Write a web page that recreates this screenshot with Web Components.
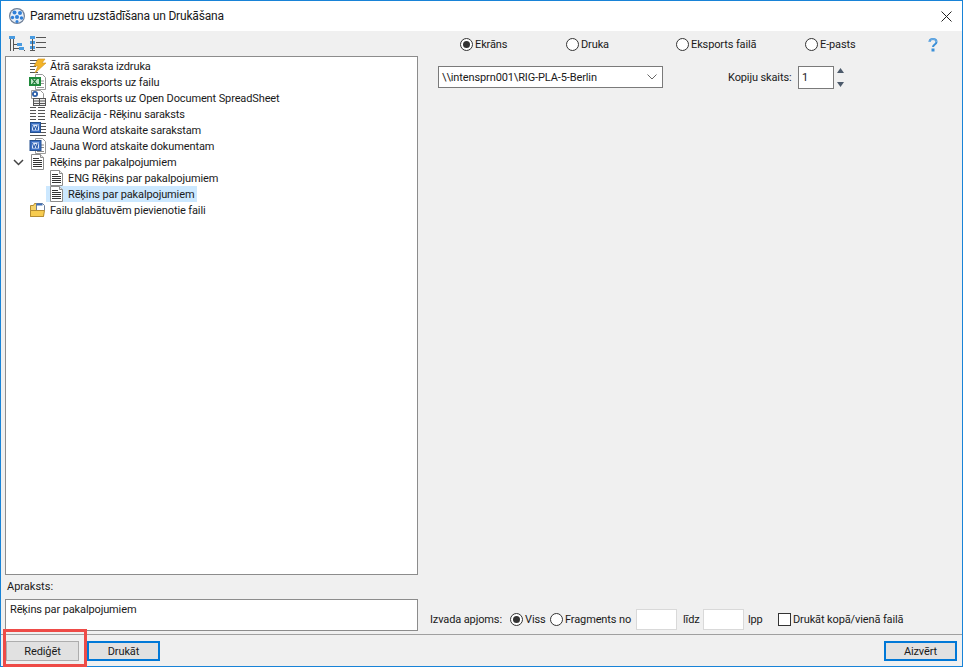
<!DOCTYPE html>
<html>
<head>
<meta charset="utf-8">
<style>
  html, body { margin: 0; padding: 0; width: 963px; height: 667px; overflow: hidden; background: #f0f0f0; }
  body { font: 11px Roboto, "Open Sans", sans-serif; color: #1a1a1a; letter-spacing: -0.12px; }
</style>
</head>
<body>
<template id="icons">
  <svg data-i="quick" width="16" height="16" viewBox="0 0 16 16"><g stroke="#555"><path d="M0 2.500h9M0 5.500h7M0 8.500h6M0 11.500h5M0 14.500h8"/></g><path d="M8 1h7l-3 4h4L5 15l3-7H4z" fill="#f3b428" stroke="#d0901a" stroke-width=".6"/></svg>
  <svg data-i="excel" width="16" height="16" viewBox="0 0 16 16"><path d="M5.500.5h7l3 3v12h-10z" fill="#fff" stroke="#999"/><path d="M11 7h3M11 9.500h3M7 13.500h7" stroke="#999"/><rect x="-1" y="3" width="12" height="9" fill="#1f8a3b"/><rect x="1" y="5" width="8" height="5" fill="#bfe6c8"/><path d="M2.500 5l4 5M6.500 5l-4 5" stroke="#177030" stroke-width="1.200"/></svg>
  <svg data-i="ods" width="16" height="16" viewBox="0 0 16 16"><path d="M1.500.5h9l3 3v5h-12z" fill="#fff" stroke="#999"/><circle cx="5" cy="4" r="3" fill="#2c5fa8"/><circle cx="5" cy="4" r="1.200" fill="#fff"/><rect x="3.500" y="8.500" width="12" height="7" fill="#eee" stroke="#555"/><path d="M3.500 11h12M3.500 13.500h12M9.500 8.500v7" stroke="#555"/></svg>
  <svg data-i="list" width="16" height="16" viewBox="0 0 16 16"><g stroke="#555"><path d="M0 1.500h6M0 4.500h6M0 7.500h6M0 10.500h6M0 13.500h6M8 1.500h7M8 4.500h7M8 7.500h7M8 10.500h7M8 13.500h7"/></g></svg>
  <svg data-i="wordlist" width="16" height="16" viewBox="0 0 16 16"><g stroke="#555"><path d="M11 1.500h5M11 4.500h5M11 7.500h5M11 10.500h5M0 13.500h16"/></g><rect x=".5" y=".5" width="10" height="10" fill="#3a6fc4" stroke="#24508f"/><rect x="2" y="2.500" width="7" height="6" fill="#dce8f8"/><path d="M2.500 3l1.500 5 1.500-4 1.500 4 1-5" fill="none" stroke="#2456a8"/></svg>
  <svg data-i="worddoc" width="16" height="16" viewBox="0 0 16 16"><path d="M5.500.5h7l3 3v12h-10z" fill="#fff" stroke="#999"/><path d="M11 7h3M11 9.500h3M7 13.500h7" stroke="#888"/><rect y="2.500" width="11" height="10" fill="#3a6fc4" stroke="#24508f"/><rect x="2" y="4.500" width="7" height="6" fill="#dce8f8"/><path d="M2.500 5l1.500 5 1.500-4 1.500 4 1-5" fill="none" stroke="#2456a8"/></svg>
  <svg data-i="doc" width="16" height="16" viewBox="0 0 16 16"><path d="M1.500.5h9l3 3v12h-12z" fill="#fff" stroke="#8c8c8c"/><path d="M10.500.5v3h3" fill="#e8e8e8" stroke="#8c8c8c"/><path d="M3 4.500h6M3 6.500h9M3 8.500h9M3 10.500h9M3 12.500h9" stroke="#333"/></svg>
  <svg data-i="folder" width="16" height="16" viewBox="0 0 16 16"><path d="M.5 3.500h3l1-2h5v2h4v11H.5z" fill="#f6d36a" stroke="#b58d32"/><path d="M6.500 1.500h6l2 2v5h-8z" fill="#fff" stroke="#6f7f9a"/><path d="M6.500 1.500h6v2h-6z" fill="#3f6fb5"/><path d="M.5 8.500h14l-1 6H.5z" fill="#f7cc50" stroke="#b58d32"/></svg>
</template>

<dialog-window></dialog-window>

<script>
const iconSrc = document.getElementById('icons').content;
function iconMarkup(name) {
    return iconSrc.querySelector(`[data-i="${name}"]`).outerHTML;
}

class TitleBar extends HTMLElement {
    constructor() {
        super();
        this.attachShadow({ mode: 'open' }).innerHTML = `
            <style>
                :host { display: flex; align-items: center; height: 30px; background: #fff; padding: 0 8px; flex: none; font-size: 12px; letter-spacing: -0.18px; }
                .text { margin-left: 5px; flex: 1; }
                svg { display: block; }
            </style>
            <svg width="16" height="16" viewBox="0 0 16 16">
                <circle cx="8" cy="8" r="8" fill="#6f7f96"/>
                <circle cx="8" cy="8" r="6.800" fill="#e6eef8"/>
                <circle cx="5.500" cy="4.500" r="2" fill="#2f7fd8"/><circle cx="11" cy="5" r="2" fill="#2f7fd8"/>
                <circle cx="8" cy="9" r="2" fill="#2f7fd8"/><circle cx="3.500" cy="9.500" r="1.700" fill="#2f7fd8"/>
                <circle cx="12.500" cy="10" r="1.700" fill="#2f7fd8"/><circle cx="8" cy="13.500" r="1.500" fill="#2f7fd8"/>
            </svg>
            <span class="text"><slot></slot></span>
            <svg width="11" height="11" viewBox="0 0 11 11" style="margin-right:2px"><path d="M.5.500l10 10M10.500.500l-10 10" stroke="#222" fill="none"/></svg>
        `;
    }
}

class TreeRow extends HTMLElement {
    constructor() {
        super();
        this.attachShadow({ mode: 'open' });
    }
    connectedCallback() {
        const child = this.hasAttribute('child');
        const open = this.hasAttribute('open');
        const selected = this.hasAttribute('selected');
        this.shadowRoot.innerHTML = `
            <style>
                :host { display: flex; align-items: center; height: 16px; padding-left: ${child ? 43 : 24}px; position: relative; white-space: nowrap; }
                .box { display: flex; align-items: center; height: 16px; padding: 0 3px 0 3px; margin-left: -3px; background: ${selected ? '#cce8ff' : 'transparent'}; }
                .icon { width: 16px; height: 16px; margin-right: ${child ? 3 : 4}px; flex: none; }
                .chevron { position: absolute; left: 7px; top: 5px; }
                svg { display: block; overflow: visible; }
            </style>
            ${open ? '<svg class="chevron" width="11" height="7" viewBox="0 0 11 7"><path d="M1 1l4.500 4.500L10 1" fill="none" stroke="#444" stroke-width="1.500"/></svg>' : ''}
            <div class="box"><span class="icon">${iconMarkup(this.getAttribute('icon'))}</span><slot></slot></div>
        `;
    }
}

class TreePanel extends HTMLElement {
    constructor() {
        super();
        this.attachShadow({ mode: 'open' }).innerHTML = `
            <style>
                :host { display: block; flex: 1; background: #fff; border: 1px solid #8c8c8c; padding-top: 1px; min-height: 0; }
            </style>
            <slot></slot>
        `;
    }
}

class RadioOpt extends HTMLElement {
    constructor() {
        super();
        this.attachShadow({ mode: 'open' });
    }
    connectedCallback() {
        const on = this.hasAttribute('checked');
        this.shadowRoot.innerHTML = `
            <style>
                :host { display: inline-flex; align-items: center; white-space: nowrap; }
                .r { width: 11px; height: 11px; border: 1px solid #333; border-radius: 50%; background: #fff; margin-right: 2px; position: relative; flex: none; }
                .d { position: absolute; left: 2px; top: 2px; width: 7px; height: 7px; border-radius: 50%; background: #333; }
            </style>
            <span class="r">${on ? '<span class="d"></span>' : ''}</span><slot></slot>
        `;
    }
}

class PushButton extends HTMLElement {
    constructor() {
        super();
        this.attachShadow({ mode: 'open' });
    }
    connectedCallback() {
        const accent = this.hasAttribute('accent');
        this.shadowRoot.innerHTML = `
            <style>
                :host { display: flex; align-items: center; justify-content: center; box-sizing: border-box; width: 73px; height: 20px; background: #e1e1e1; border: ${accent ? '2px solid #0078d7' : '1px solid #adadad'}; }
            </style>
            <slot></slot>
        `;
    }
}

class FieldBox extends HTMLElement {
    constructor() {
        super();
        this.attachShadow({ mode: 'open' }).innerHTML = `
            <style>
                :host { display: flex; align-items: center; box-sizing: border-box; background: #fff; border: 1px solid #7a7a7a; padding-left: 3px; }
                :host([soft]) { border-color: #d9d9d9; }
            </style>
            <slot></slot>
        `;
    }
}

class DialogWindow extends HTMLElement {
    constructor() {
        super();
        this.attachShadow({ mode: 'open' }).innerHTML = `
            <style>
                :host { display: flex; flex-direction: column; box-sizing: border-box; width: 963px; height: 667px; border: 1px solid #1883d7; background: #f0f0f0; position: relative; }
                .main { flex: 1; display: flex; min-height: 0; border-bottom: 1px solid #a0a0a0; }
                .left { width: 413px; margin-left: 4px; flex: none; display: flex; flex-direction: column; padding-bottom: 3px; box-sizing: border-box; }
                .tools { display: flex; align-items: center; gap: 4px; height: 25px; padding-left: 4px; flex: none; }
                .tools svg { display: block; }
                .caption { height: 24px; padding-left: 2px; flex: none; display: flex; align-items: center; letter-spacing: 0; padding-bottom: 1px; box-sizing: border-box; }
                .desc { height: 32px; flex: none; box-sizing: border-box; background: #fff; border: 1px solid #8c8c8c; padding: 3px 4px; }
                .right { flex: 1; display: flex; flex-direction: column; padding-left: 12px; min-width: 0; }
                .modes { display: grid; grid-template-columns: 106px 110px 129px 122px 20px; align-items: center; height: 27px; padding-left: 30px; flex: none; }
                .modes svg { display: block; }
                .printer { display: flex; align-items: flex-start; height: 22px; margin: 8px 0 0 8px; flex: none; }
                .select { width: 225px; height: 22px; justify-content: space-between; padding-right: 5px; }
                .copies { margin-left: 65px; height: 22px; display: flex; align-items: center; }
                .copies .label { width: 70px; }
                .count { width: 36px; height: 23px; }
                .spin { margin-left: 3px; display: flex; flex-direction: column; gap: 9px; padding-top: 1px; }
                .spin svg { display: block; }
                .grow { flex: 1; }
                .range { display: grid; grid-template-columns: 80px 40px 86px 41px 26px 41px 34px 15px auto; align-items: center; height: 21px; margin-bottom: 4px; flex: none; white-space: nowrap; }
                .range .small { height: 21px; }
                .foot { height: 31px; flex: none; display: flex; align-items: flex-start; padding: 6px 5px 0 5px; gap: 8px; box-sizing: border-box; }
                .mark { position: absolute; left: 2px; top: 628px; width: 84px; height: 38px; box-sizing: border-box; border: 3px solid #ee4b47; }
                .check { width: 11px; height: 11px; border: 1px solid #333; background: #fff; }
            </style>
            <title-bar>Parametru uzstādīšana un Drukāšana</title-bar>
            <div class="main">
                <div class="left">
                    <div class="tools">
                        <svg width="17" height="17" viewBox="0 0 17 17"><path d="M1.500 3v13M4.500 3v13M4.500 9.500h4M4.500 13.500h6" stroke="#555" fill="none"/><rect x="0" y="1" width="6" height="3" fill="#4a9be0"/><rect x="8" y="8" width="5" height="3" fill="#4a9be0"/><rect x="10" y="12" width="5" height="3" fill="#4a9be0"/><path d="M15 15.500h1" stroke="#555"/></svg>
                        <svg width="17" height="17" viewBox="0 0 17 17"><g fill="#4a9be0"><rect x="0" y="1" width="5" height="3"/><rect x="0" y="6" width="5" height="3"/><rect x="0" y="11" width="5" height="3"/></g><path d="M2.500 4v11M0 15.500h5M6 2.500h10M6 7.500h10M6 12.500h10" stroke="#555" fill="none"/></svg>
                    </div>
                    <tree-panel>
                        <tree-row icon="quick">Ātrā saraksta izdruka</tree-row>
                        <tree-row icon="excel">Ātrais eksports uz failu</tree-row>
                        <tree-row icon="ods">Ātrais eksports uz Open Document SpreadSheet</tree-row>
                        <tree-row icon="list">Realizācija - Rēķinu saraksts</tree-row>
                        <tree-row icon="wordlist">Jauna Word atskaite sarakstam</tree-row>
                        <tree-row icon="worddoc">Jauna Word atskaite dokumentam</tree-row>
                        <tree-row icon="doc" open>Rēķins par pakalpojumiem</tree-row>
                        <tree-row icon="doc" child>ENG Rēķins par pakalpojumiem</tree-row>
                        <tree-row icon="doc" child selected>Rēķins par pakalpojumiem</tree-row>
                        <tree-row icon="folder">Failu glabātuvēm pievienotie faili</tree-row>
                    </tree-panel>
                    <div class="caption">Apraksts:</div>
                    <div class="desc">Rēķins par pakalpojumiem</div>
                </div>
                <div class="right">
                    <div class="modes">
                        <radio-opt checked>Ekrāns</radio-opt>
                        <radio-opt>Druka</radio-opt>
                        <radio-opt>Eksports failā</radio-opt>
                        <radio-opt>E-pasts</radio-opt>
                        <svg width="12" height="15" viewBox="0 0 12 15"><path d="M2.500 5c0-4 7-4 7 0 0 2.500-3.500 2.500-3.500 5" fill="none" stroke="#3a8fd8" stroke-width="2"/><path d="M2.500 5c0-4 7-4 7 0" fill="none" stroke="#9cc8ee" stroke-width=".7"/><rect x="4.500" y="11.500" width="3" height="3" fill="#3a8fd8"/></svg>
                    </div>
                    <div class="printer">
                        <field-box class="select">\\\\intensprn001\\RIG-PLA-5-Berlin<svg width="10" height="6" viewBox="0 0 10 6"><path d="M.5.500l4.500 4.500 4.500-4.500" fill="none" stroke="#666"/></svg></field-box>
                        <div class="copies"><span class="label">Kopiju skaits:</span>
                            <field-box class="count">1</field-box>
                            <div class="spin">
                                <svg width="7" height="5" viewBox="0 0 7 5"><path d="M3.500 0l3.500 5h-7z" fill="#4c5a6b"/></svg>
                                <svg width="7" height="5" viewBox="0 0 7 5"><path d="M3.500 5l3.500-5h-7z" fill="#4c5a6b"/></svg>
                            </div>
                        </div>
                    </div>
                    <div class="grow"></div>
                    <div class="range">
                        <span>Izvada apjoms:</span>
                        <radio-opt checked>Viss</radio-opt>
                        <radio-opt>Fragments no</radio-opt>
                        <field-box soft class="small"></field-box>
                        <span style="padding-left:6px">līdz</span>
                        <field-box soft class="small"></field-box>
                        <span style="padding-left:4px">lpp</span>
                        <span class="check"></span>
                        <span>Drukāt kopā/vienā failā</span>
                    </div>
                </div>
            </div>
            <div class="foot">
                <push-button>Rediģēt</push-button>
                <push-button accent>Drukāt</push-button>
                <span class="grow"></span>
                <push-button accent>Aizvērt</push-button>
            </div>
            <div class="mark"></div>
        `;
    }
}

customElements.define('title-bar', TitleBar);
customElements.define('tree-row', TreeRow);
customElements.define('tree-panel', TreePanel);
customElements.define('radio-opt', RadioOpt);
customElements.define('push-button', PushButton);
customElements.define('field-box', FieldBox);
customElements.define('dialog-window', DialogWindow);
</script>
</body>
</html>
